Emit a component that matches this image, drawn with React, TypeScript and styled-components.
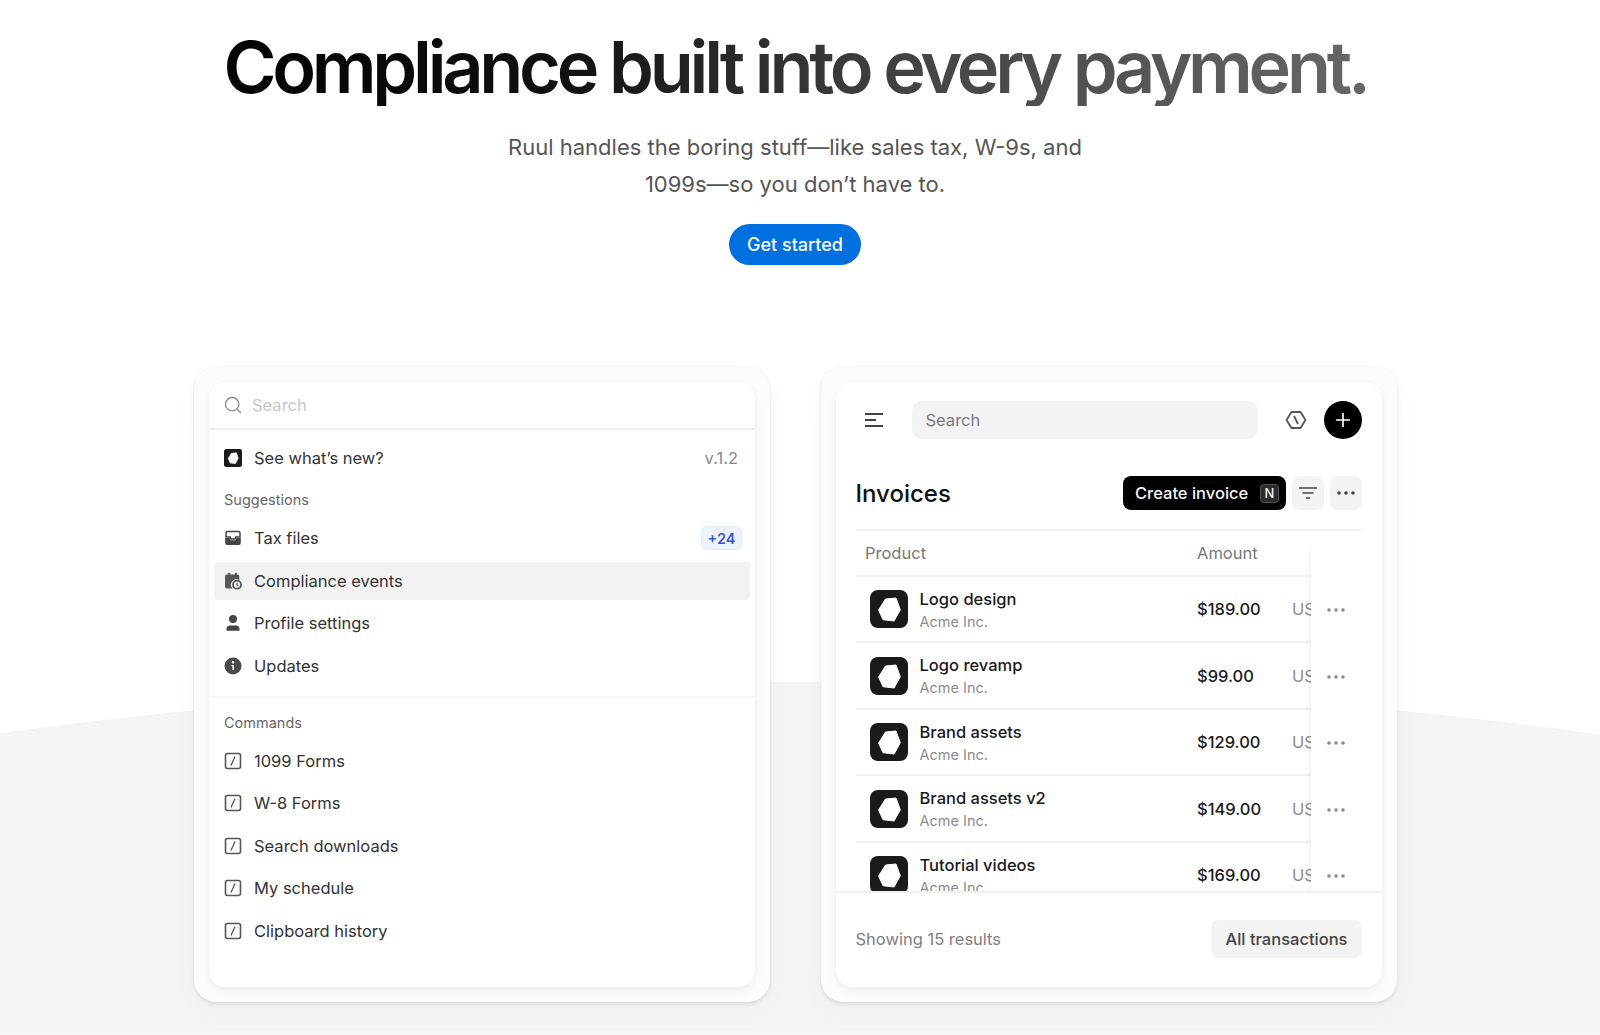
import styled, { createGlobalStyle } from 'styled-components';
import { Plus, Search } from 'lucide-react';

const GlobalStyle = createGlobalStyle`
  html, body {
    margin: 0;
    padding: 0;
    background: #fff;
  }
  body {
    font-family: Inter, "Noto Sans", sans-serif;
    color: #222;
  }
  * {
    box-sizing: border-box;
  }
`;

const Page = styled.div`
  width: 1600px;
  height: 1035px;
  padding-right: 9px;
  overflow: hidden;
  border-bottom: 4px solid #f6f6f8;
  background: radial-gradient(ellipse 1600px 386px at 795px 1068px, #f3f4f6 99.9%, #fff 100%);
`;

const Hero = styled.section`
  display: flex;
  flex-direction: column;
  align-items: center;
  padding: 27px 1px 0 0;
`;

const Title = styled.h1`
  margin: 0;
  font-size: 72px;
  line-height: 79px;
  font-weight: 600;
  letter-spacing: -4.25px;
  white-space: nowrap;
  background: linear-gradient(90deg, #000 0%, #111 30%, #444 60%, #666 100%);
  -webkit-background-clip: text;
  background-clip: text;
  color: transparent;
`;

const Subtitle = styled.p`
  margin: 23px 0 0;
  width: 640px;
  text-align: center;
  font-size: 22px;
  line-height: 36.7px;
  color: #555;
`;

const GetStarted = styled.button`
  margin-top: 22px;
  width: 132px;
  height: 41px;
  border: 0;
  border-radius: 21px;
  background: #0070e0;
  color: #fff;
  font-family: inherit;
  font-size: 18px;
  font-weight: 500;
`;

const Cards = styled.div`
  display: flex;
  justify-content: center;
  gap: 51px;
  margin-top: 102px;
`;

const Card = styled.div`
  width: 576px;
  height: 635px;
  padding: 15px;
  border-radius: 22px;
  background: #fcfcfc;
  box-shadow: 0 2px 4px rgba(0, 0, 0, 0.09), 0 0 3px rgba(0, 0, 0, 0.04), 0 10px 30px rgba(0, 0, 0, 0.025);
`;

const Panel = styled.div`
  height: 100%;
  border-radius: 16px;
  background: #fff;
  box-shadow: 0 4px 10px rgba(0, 0, 0, 0.06), 0 0 2px rgba(0, 0, 0, 0.04);
  overflow: hidden;
  display: flex;
  flex-direction: column;
`;

const SearchRow = styled.div`
  height: 48px;
  flex: none;
  display: flex;
  align-items: center;
  gap: 9px;
  padding-left: 14px;
  border-bottom: 2px solid #eeeeee;
  color: #c6c6c6;
  font-size: 16.5px;
  svg {
    color: #8a8a8a;
  }
`;

const Section = styled.div`
  display: flex;
  flex-direction: column;
  gap: 4.67px;
  padding: 0 5px;
`;

const TopSection = styled(Section)`
  padding-top: 8.5px;
  padding-bottom: 11px;
  border-bottom: 2px solid #f6f6f6;
`;

const CommandSection = styled(Section)`
  padding-top: 14.5px;
`;

const Label = styled.div`
  height: 20px;
  margin: 8.5px 0 4.33px;
  padding-left: 10px;
  font-size: 14.5px;
  line-height: 20px;
  color: #666;
`;

const CommandLabel = styled(Label)`
  margin-top: 0;
`;

const Item = styled.div<{ $active?: boolean }>`
  height: 38px;
  flex: none;
  display: flex;
  align-items: center;
  gap: 12px;
  padding: 0 12px 0 10px;
  border-radius: 4px;
  font-size: 16.5px;
  color: #333;
  background: ${(p) => (p.$active ? '#f2f2f2' : 'transparent')};
  svg {
    flex: none;
  }
`;

const Version = styled.span`
  margin-left: auto;
  color: #888;
  font-size: 16.5px;
`;

const Badge = styled.span`
  margin-left: auto;
  margin-right: -4px;
  width: 41px;
  height: 24px;
  display: flex;
  align-items: center;
  justify-content: center;
  border-radius: 6px;
  background: #edf3fc;
  box-shadow: inset 0 0 0 1px #e3ecf8;
  color: #3b55d0;
  font-size: 14.5px;
  font-weight: 600;
`;

const Body = styled.div`
  height: 509px;
  flex: none;
  overflow: hidden;
  padding: 19px 20px 0 19.5px;
`;

const TopBar = styled.div`
  display: flex;
  align-items: center;
  height: 38px;
`;

const Burger = styled.svg`
  margin-left: 9.5px;
  flex: none;
`;

const Field = styled.div`
  margin-left: 28.5px;
  width: 346px;
  height: 38px;
  display: flex;
  align-items: center;
  padding: 0 0 1px 14px;
  border-radius: 10px;
  background: #f2f3f5;
  color: #7b7b7b;
  font-size: 16.5px;
`;

const HexButton = styled.svg`
  margin-left: 27px;
  flex: none;
`;

const RoundAdd = styled.button`
  margin-left: auto;
  width: 38px;
  height: 38px;
  padding: 0;
  border: 0;
  border-radius: 50%;
  background: #000;
  color: #fff;
  display: flex;
  align-items: center;
  justify-content: center;
`;

const Heading = styled.div`
  display: flex;
  align-items: center;
  height: 34px;
  margin-top: 37px;
  gap: 6px;
`;

const HeadingText = styled.h2`
  margin: 0 auto 0 0;
  font-size: 24px;
  font-weight: 500;
  color: #111;
`;

const Create = styled.button`
  width: 163px;
  height: 34px;
  display: flex;
  align-items: center;
  padding: 0 7px 0 12px;
  border: 0;
  border-radius: 8px;
  background: #000;
  color: #f5f5f5;
  font-family: inherit;
  font-size: 16.5px;
  font-weight: 500;
`;

const Key = styled.kbd`
  margin-left: auto;
  width: 19px;
  height: 19px;
  display: flex;
  align-items: center;
  justify-content: center;
  border: 1px solid #555;
  border-radius: 4px;
  background: #2b2b2b;
  font-family: inherit;
  font-size: 13px;
`;

const Square = styled.button`
  width: 32px;
  height: 34px;
  padding: 0;
  border: 0;
  border-radius: 8px;
  background: #f3f3f3;
  color: #444;
  display: flex;
  align-items: center;
  justify-content: center;
`;

const Table = styled.div`
  display: flex;
  margin-top: 19px;
  border-top: 2px solid #f0f0f0;
`;

const Rows = styled.div`
  width: 455px;
  flex: none;
  overflow: hidden;
`;

const HeaderRow = styled.div`
  display: grid;
  grid-template-columns: 332px 1fr;
  align-items: center;
  height: 45.5px;
  padding-left: 9.5px;
  border-bottom: 2px solid #f2f2f2;
  font-size: 16.5px;
  color: #777;
`;

const Row = styled.div`
  display: grid;
  grid-template-columns: 327.5px 95px 1fr;
  align-items: center;
  height: 66.5px;
  padding-left: 14px;
  border-bottom: 2px solid #f2f2f2;
  white-space: nowrap;
  overflow: hidden;
`;

const Product = styled.div`
  display: flex;
  align-items: center;
  gap: 12px;
`;

const ProductLogo = styled.svg`
  flex: none;
`;

const ProductText = styled.div`
  padding-top: 2px;
`;

const ProductName = styled.div`
  font-size: 16.5px;
  line-height: 23px;
  font-weight: 500;
  color: #1a1a1a;
`;

const ProductSub = styled.div`
  font-size: 14.5px;
  line-height: 22px;
  color: #8c8c8c;
`;

const Amount = styled.span`
  font-size: 16.5px;
  font-weight: 500;
  color: #1a1a1a;
`;

const Currency = styled.span`
  font-size: 16.5px;
  color: #8c8c8c;
`;

const Actions = styled.div`
  flex: 1;
  margin-right: -20px;
  margin-top: 6px;
  padding-top: 39.5px;
  background: #fff;
  box-shadow: -5px 6px 8px -6px rgba(0, 0, 0, 0.1);
`;

const ActionCell = styled.div`
  height: 66.5px;
  width: 51px;
  display: flex;
  align-items: center;
  justify-content: center;
  color: #8a8a8a;
`;

const Footer = styled.div`
  flex: 1;
  display: flex;
  align-items: center;
  justify-content: space-between;
  padding: 0 20px 3px 19.5px;
  border-top: 2px solid #f2f2f2;
  font-size: 16.5px;
  color: #808080;
`;

const AllButton = styled.button`
  width: 151px;
  height: 38px;
  border: 0;
  border-radius: 8px;
  background: #f3f3f3;
  color: #444;
  font-family: inherit;
  font-size: 16.5px;
  font-weight: 500;
`;

const Dots = ({ color = 'currentColor' }: { color?: string }) => (
  <svg width="18" height="4" viewBox="0 0 18 4" fill={color}>
    <circle cx="2" cy="2" r="1.8" />
    <circle cx="9" cy="2" r="1.8" />
    <circle cx="16" cy="2" r="1.8" />
  </svg>
);

const LogoMark = ({ size, radius }: { size: number; radius: number }) => (
  <ProductLogo width={size} height={size} viewBox="0 0 38 38">
    <rect width="38" height="38" rx={radius} fill="#1a1a1a" />
    <path
      d="M15.5 9 L26 8 L30.3 19.7 L24.1 31 L13 29.7 L8.6 20 Z"
      fill="#fff"
      stroke="#fff"
      strokeWidth="1"
      strokeLinejoin="round"
    />
  </ProductLogo>
);

const InboxIcon = () => (
  <svg width="18" height="18" viewBox="0 0 18 18" fill="#444">
    <path d="M3.5 2.5h11A1.5 1.5 0 0 1 16 4v4h-4.2l-.8 2H7l-.8-2H2V4a1.5 1.5 0 0 1 1.5-1.5Z" fill="none" stroke="#444" strokeWidth="1.5" />
    <path d="M1.2 9h4.4l.9 2.2h5l.9-2.2h4.4v5a2 2 0 0 1-2 2H3.2a2 2 0 0 1-2-2Z" />
  </svg>
);

const CalendarIcon = () => (
  <svg width="18" height="18" viewBox="0 0 18 18">
    <path d="M1 4.2A1.7 1.7 0 0 1 2.7 2.5H4V1h2v1.500h5V1h2v1.500h.6A1.700 1.700 0 0 1 15.300 4.200V8a5.500 5.500 0 0 0-6.800 8.500H2.700A1.700 1.700 0 0 1 1 14.800Z" fill="#555" />
    <circle cx="13" cy="12.700" r="4" fill="none" stroke="#555" strokeWidth="1.800" />
    <path d="M13 10.800v2.200l1.300.8" fill="none" stroke="#555" strokeWidth="1.200" />
  </svg>
);

const PersonIcon = () => (
  <svg width="18" height="18" viewBox="0 0 18 18" fill="#444">
    <circle cx="9" cy="5" r="4" />
    <path d="M2.500 15a3.500 3.500 0 0 1 3.500-3.500h6a3.500 3.500 0 0 1 3.500 3.500v1.800H2.500Z" />
  </svg>
);

const InfoIcon = () => (
  <svg width="18" height="18" viewBox="0 0 18 18">
    <circle cx="9" cy="9" r="8.500" fill="#4a4a4a" />
    <circle cx="9" cy="5.300" r="1.200" fill="#fff" />
    <path d="M7.500 8h2.500v5H8.500V9.300H7.500Z" fill="#fff" />
  </svg>
);

const SlashIcon = () => (
  <svg width="18" height="18" viewBox="0 0 18 18" fill="none" stroke="#555">
    <rect x="1.500" y="1.500" width="15" height="15" rx="2" strokeWidth="1.600" />
    <path d="M11 4.500 7 13.500" strokeWidth="1.300" />
  </svg>
);

const suggestions = [
  { name: 'Tax files', icon: <InboxIcon />, badge: '+24' },
  { name: 'Compliance events', icon: <CalendarIcon />, active: true },
  { name: 'Profile settings', icon: <PersonIcon /> },
  { name: 'Updates', icon: <InfoIcon /> },
];

const commands = ['1099 Forms', 'W-8 Forms', 'Search downloads', 'My schedule', 'Clipboard history'];

const invoices = [
  { name: 'Logo design', amount: '$189.00' },
  { name: 'Logo revamp', amount: '$99.00' },
  { name: 'Brand assets', amount: '$129.00' },
  { name: 'Brand assets v2', amount: '$149.00' },
  { name: 'Tutorial videos', amount: '$169.00' },
];

const App = () => {
  return (
    <Page>
      <GlobalStyle />
      <Hero>
        <Title>Compliance built into every payment.</Title>
        <Subtitle>
          Ruul handles the boring stuff—like sales tax, W-9s, and
          <br />
          1099s—so you don’t have to.
        </Subtitle>
        <GetStarted>Get started</GetStarted>
      </Hero>
      <Cards>
        <Card>
          <Panel>
            <SearchRow>
              <Search size={20} strokeWidth={1.6} />
              Search
            </SearchRow>
            <TopSection>
              <Item>
                <LogoMark size={18} radius={5} />
                See what’s new?
                <Version>v.1.2</Version>
              </Item>
              <Label>Suggestions</Label>
              {suggestions.map((s) => (
                <Item key={s.name} $active={s.active}>
                  {s.icon}
                  {s.name}
                  {s.badge && <Badge>{s.badge}</Badge>}
                </Item>
              ))}
            </TopSection>
            <CommandSection>
              <CommandLabel>Commands</CommandLabel>
              {commands.map((c) => (
                <Item key={c}>
                  <SlashIcon />
                  {c}
                </Item>
              ))}
            </CommandSection>
          </Panel>
        </Card>
        <Card>
          <Panel>
            <Body>
              <TopBar>
                <Burger width="18" height="16" viewBox="0 0 18 16" fill="none" stroke="#444" strokeWidth="1.800">
                  <path d="M0 2h18M0 8h11M0 14h18" />
                </Burger>
                <Field>Search</Field>
                <HexButton width="22" height="20" viewBox="0 0 22 20" fill="none" stroke="#555" strokeWidth="1.800" strokeLinejoin="round">
                  <path d="M6.500 2h9L20.500 10l-5 8h-9L1.500 10Z" />
                  <path d="M9 6l4 8" />
                </HexButton>
                <RoundAdd>
                  <Plus size={22} strokeWidth={1.8} />
                </RoundAdd>
              </TopBar>
              <Heading>
                <HeadingText>Invoices</HeadingText>
                <Create>
                  Create invoice
                  <Key>N</Key>
                </Create>
                <Square>
                  <svg width="18" height="14" viewBox="0 0 18 14" fill="none" stroke="#444" strokeWidth="1.600">
                    <path d="M0 2h18M3.500 7h11M7 12h4" />
                  </svg>
                </Square>
                <Square>
                  <Dots />
                </Square>
              </Heading>
              <Table>
                <Rows>
                  <HeaderRow>
                    <span>Product</span>
                    <span>Amount</span>
                  </HeaderRow>
                  {invoices.map((inv) => (
                    <Row key={inv.name}>
                      <Product>
                        <LogoMark size={38} radius={8} />
                        <ProductText>
                          <ProductName>{inv.name}</ProductName>
                          <ProductSub>Acme Inc.</ProductSub>
                        </ProductText>
                      </Product>
                      <Amount>{inv.amount}</Amount>
                      <Currency>USD</Currency>
                    </Row>
                  ))}
                </Rows>
                <Actions>
                  {invoices.map((inv) => (
                    <ActionCell key={inv.name}>
                      <Dots />
                    </ActionCell>
                  ))}
                </Actions>
              </Table>
            </Body>
            <Footer>
              Showing 15 results
              <AllButton>All transactions</AllButton>
            </Footer>
          </Panel>
        </Card>
      </Cards>
    </Page>
  );
};

export default App;
